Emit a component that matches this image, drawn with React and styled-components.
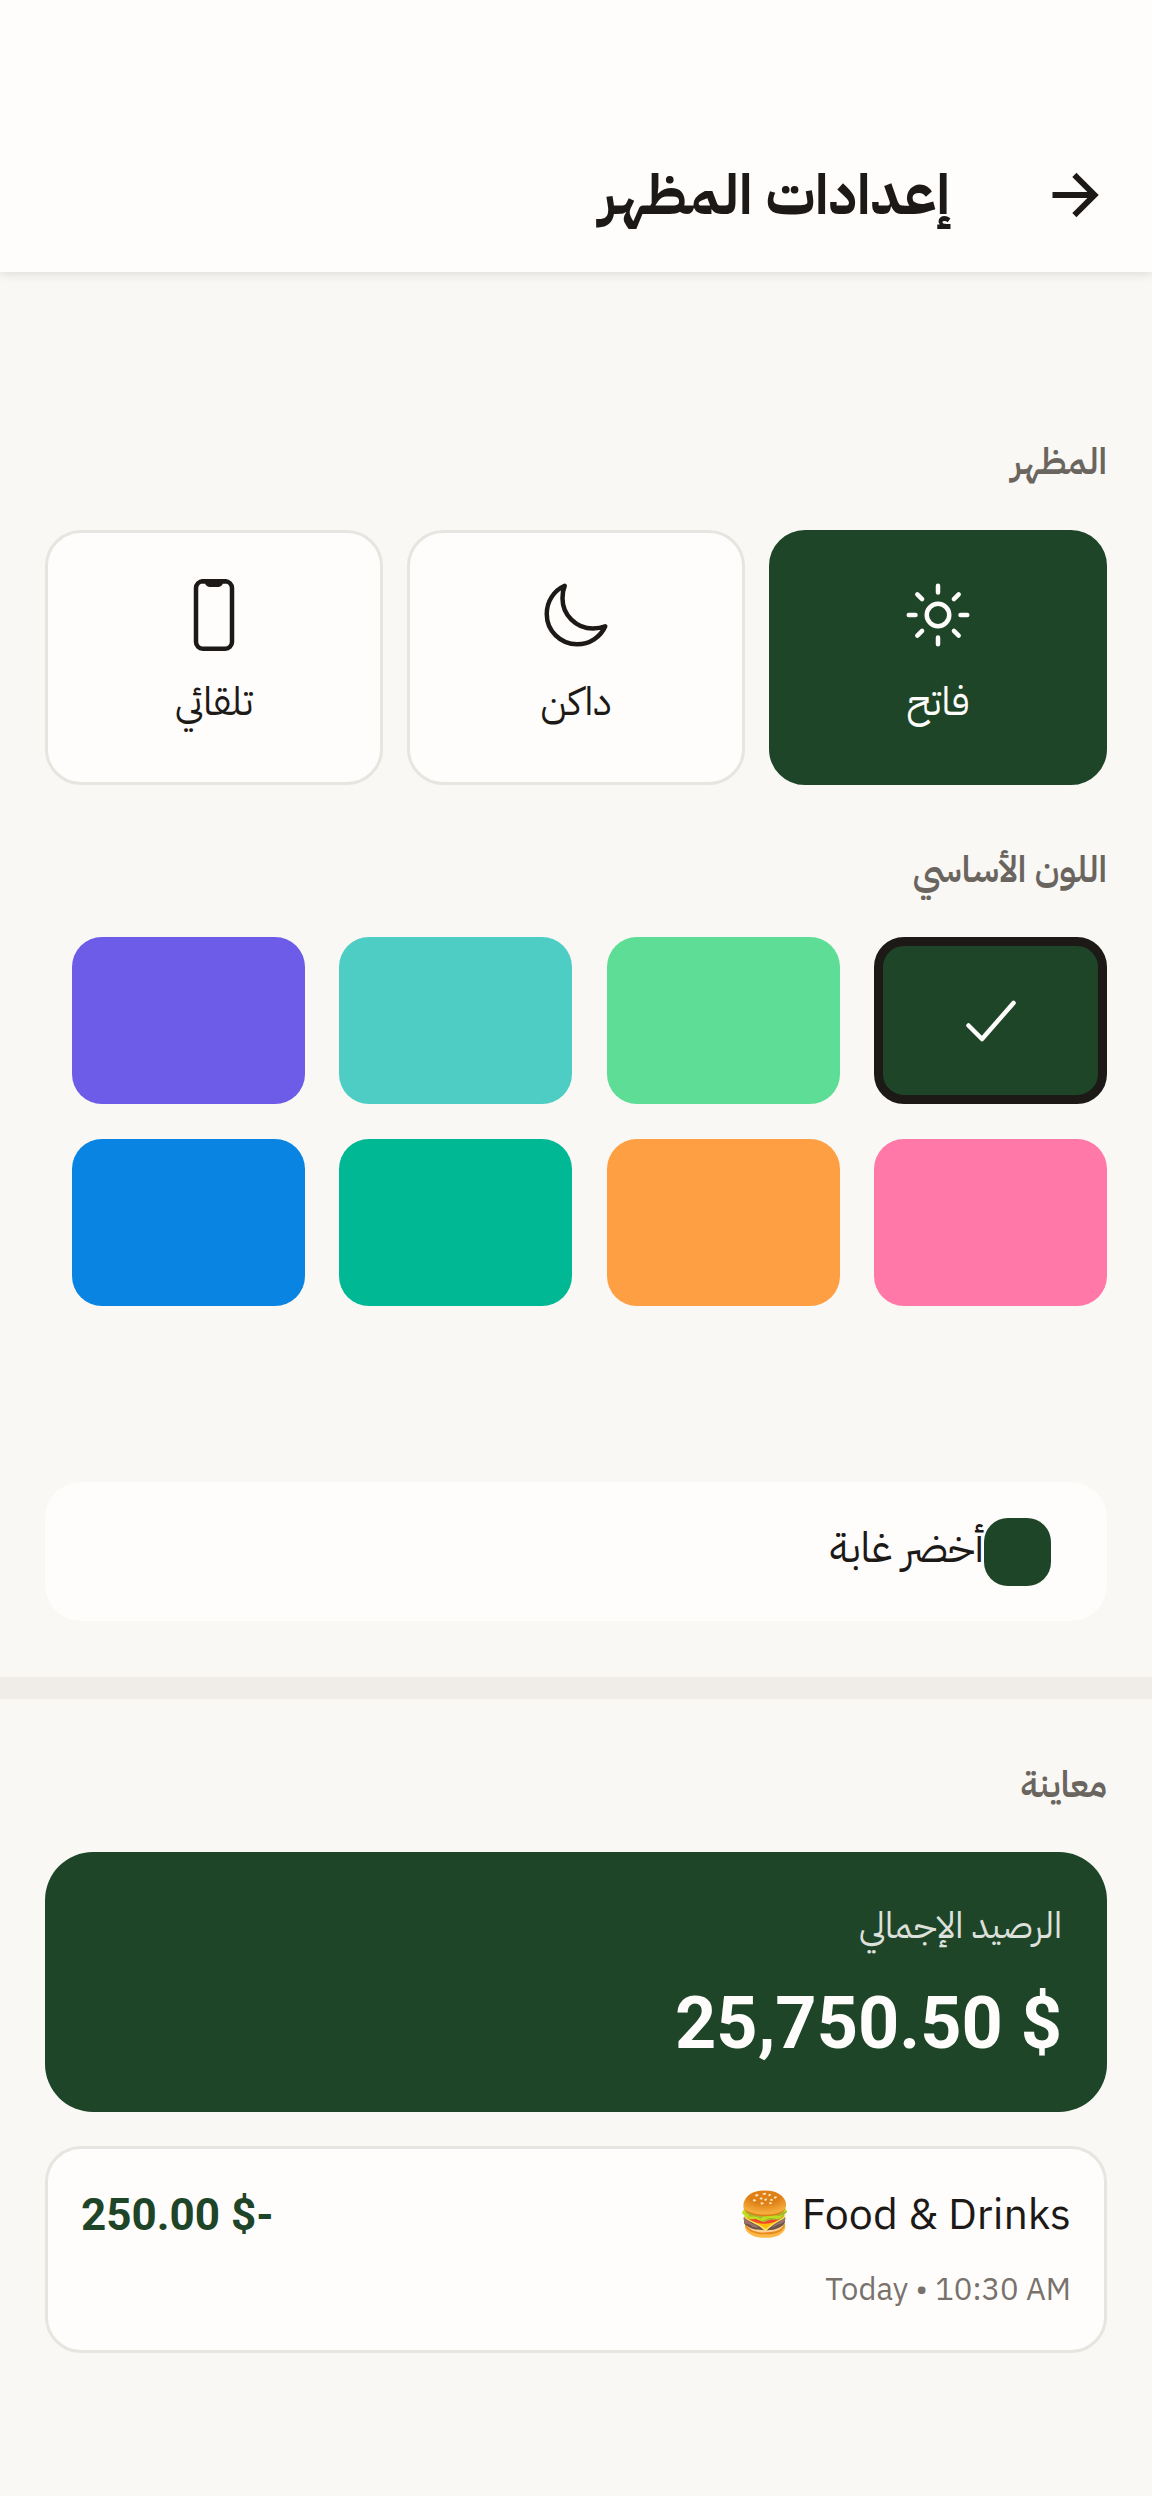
import React from 'react';
import styled, { createGlobalStyle } from 'styled-components';
import {
  IoArrowForwardSharp,
  IoSunnyOutline,
  IoMoonOutline,
  IoPhonePortraitOutline,
  IoCheckmarkOutline,
} from 'react-icons/io5';

const Global = createGlobalStyle`
  html, body { margin: 0; padding: 0; background: #F9F8F5; }
  body { font-family: "IBM Plex Sans Arabic", "Noto Sans", sans-serif; }
`;

const Page = styled.div`
  width: 1152px;
  height: 2496px;
  overflow: hidden;
  direction: rtl;
  background: #F9F8F5;
  color: #1C1917;
`;

const Header = styled.header`
  height: 272px;
  box-sizing: border-box;
  background: #FEFDFB;
  box-shadow: 0 3px 9px rgba(0, 0, 0, 0.1);
  padding: 0 45px 41px;
  display: flex;
  align-items: flex-end;
  justify-content: flex-start;
  gap: 93px;
`;

const BackIcon = styled(IoArrowForwardSharp)`
  margin-bottom: 4px;
`;

const Title = styled.h1`
  margin: 0;
  font-size: 56px;
  line-height: 72px;
  font-weight: 700;
`;

const Section = styled.section`
  padding: ${p => p.$top}px 45px 0;
`;

const Label = styled.div`
  font-size: 36px;
  line-height: 54px;
  font-weight: 600;
  color: #6B6560;
`;

const Modes = styled.div`
  display: grid;
  grid-template-columns: repeat(3, 1fr);
  gap: 24px;
  margin-top: 41px;
`;

const Mode = styled.div`
  height: 255px;
  box-sizing: border-box;
  border-radius: 36px;
  border: 3px solid ${p => (p.$on ? '#1E4528' : '#E7E5E0')};
  background: ${p => (p.$on ? '#1E4528' : '#FEFDFB')};
  color: ${p => (p.$on ? '#FEFDFB' : '#1C1917')};
  display: flex;
  flex-direction: column;
  align-items: center;
  padding-top: 46px;
  gap: 20px;
  font-size: 39px;
  line-height: 63px;
  font-weight: 400;
`;

const Swatches = styled.div`
  display: grid;
  grid-template-columns: repeat(4, 233px);
  gap: 35px 34.33px;
  margin-top: 40px;
`;

const Swatch = styled.div`
  height: 167px;
  box-sizing: border-box;
  border-radius: 30px;
  background: ${p => p.$color};
  border: ${p => (p.$on ? '9px solid #1C1917' : 'none')};
  display: flex;
  align-items: center;
  justify-content: center;
  color: #FEFDFB;
`;

const Current = styled.div`
  height: 139px;
  margin-top: 176px;
  box-sizing: border-box;
  border-radius: 36px;
  background: #FEFDFB;
  display: flex;
  align-items: center;
  padding: 0 56px;
  font-size: 42px;
`;

const CurrentDot = styled.div`
  width: 67px;
  height: 68px;
  border-radius: 24px;
  background: #1E4528;
`;

const CurrentName = styled.span`
  margin-bottom: 8px;
`;

const Divider = styled.div`
  height: 22px;
  margin-top: 56px;
  background: #F0EDE8;
`;

const Balance = styled.div`
  height: 260px;
  margin-top: 40px;
  box-sizing: border-box;
  border-radius: 48px;
  background: #1E4528;
  color: #FEFDFB;
  padding: 47px 45px 0;
`;

const BalanceLabel = styled.div`
  font-size: 36px;
  line-height: 54px;
  opacity: 0.85;
`;

const BalanceValue = styled.div`
  font-family: Roboto, sans-serif;
  font-size: 72px;
  line-height: 96px;
  font-weight: 700;
  margin-top: 23px;
`;

const Tx = styled.div`
  height: 207px;
  margin-top: 34px;
  box-sizing: border-box;
  border-radius: 36px;
  border: 3px solid #E7E5E0;
  background: #FEFDFB;
  padding: 36px 33px;
  display: flex;
  justify-content: space-between;
`;

const TxName = styled.div`
  font-size: 43px;
  line-height: 60px;
`;

const TxMeta = styled.div`
  font-size: 31px;
  line-height: 42px;
  color: #78716C;
  margin-top: 24px;
`;

const TxAmount = styled.div`
  font-family: Roboto, sans-serif;
  font-size: 44px;
  line-height: 60px;
  font-weight: 700;
  color: #1E4528;
`;

const colors = ['#1E4528', '#5DDD95', '#4ECDC4', '#6C5CE7', '#FF78A8', '#FF9F43', '#00B894', '#0984E3'];

export default function App() {
  return (
    <Page>
      <Global />
      <Header>
        <BackIcon size={64} />
        <Title>إعدادات المظهر</Title>
      </Header>
      <Section $top={163}>
        <Label>المظهر</Label>
        <Modes>
          <Mode $on><IoSunnyOutline size={72} />فاتح</Mode>
          <Mode><IoMoonOutline size={72} />داكن</Mode>
          <Mode><IoPhonePortraitOutline size={72} />تلقائي</Mode>
        </Modes>
      </Section>
      <Section $top={58}>
        <Label>اللون الأساسي</Label>
        <Swatches>
          {colors.map((c, i) => (
            <Swatch key={c} $color={c} $on={i === 0}>
              {i === 0 && <IoCheckmarkOutline size={72} />}
            </Swatch>
          ))}
        </Swatches>
        <Current><CurrentDot /><CurrentName>أخضر غابة</CurrentName></Current>
      </Section>
      <Divider />
      <Section $top={59}>
        <Label>معاينة</Label>
        <Balance>
          <BalanceLabel>الرصيد الإجمالي</BalanceLabel>
          <BalanceValue>$ 25,750.50</BalanceValue>
        </Balance>
        <Tx>
          <div>
            <TxName>Food &amp; Drinks 🍔</TxName>
            <TxMeta>Today • 10:30 AM</TxMeta>
          </div>
          <TxAmount>-$ 250.00</TxAmount>
        </Tx>
      </Section>
    </Page>
  );
}
